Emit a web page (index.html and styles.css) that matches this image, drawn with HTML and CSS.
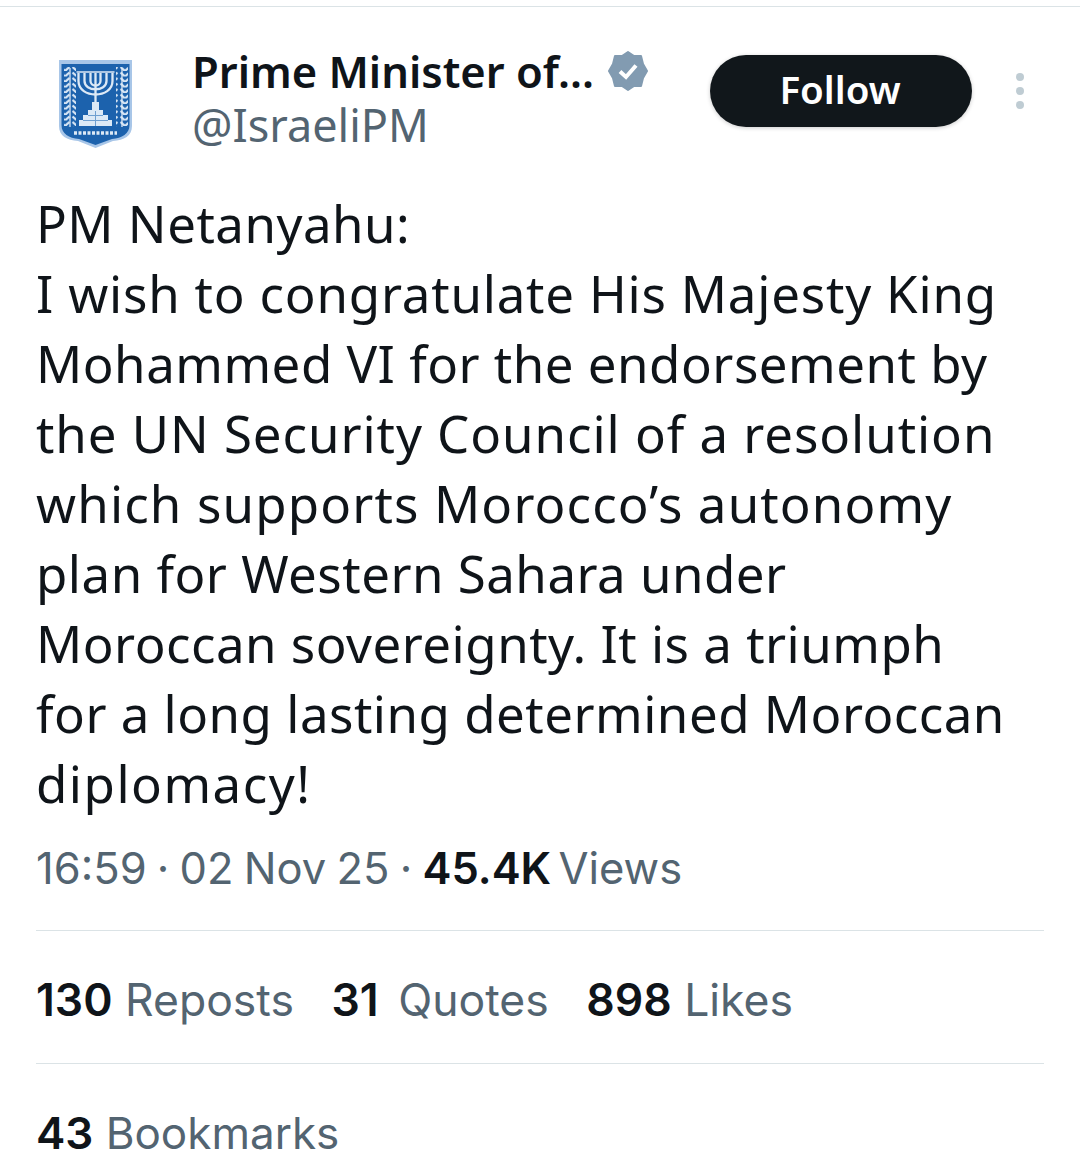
FILE: index.html
```html
<!DOCTYPE html>
<html lang="en">
<head>
<meta charset="utf-8">
<title>Tweet</title>
<link rel="stylesheet" href="styles.css">
</head>
<body>
<div class="topline"></div>
<main class="tweet">
  <header class="head">
    <svg class="avatar" viewBox="0 0 73 88" aria-hidden="true">
      <defs>
        <pattern id="leaf" width="12" height="5.5" patternUnits="userSpaceOnUse">
          <path d="M6 5.5L1.5 1.5M6 5.5L10.5 1.5" fill="none" stroke="#d8e6f5" stroke-width="2.2"/>
        </pattern>
      </defs>
      <path d="M0 0H73V66C73 76 65 80 54 81L36.500 88L19 81C8 80 0 76 0 66Z" fill="#a8c6e8"/>
      <path d="M2.500 4H70.500V65C70.500 74 63 78 53 79L36.500 85L20 79C10 78 2.500 74 2.500 65Z" fill="#1c62ad"/>
      <g fill="none" stroke="#dce9f6" stroke-width="2.300">
        <path d="M36.500 13V50"/>
        <path d="M31.500 13V21C31.500 27 41.500 27 41.500 21V13"/>
        <path d="M25.500 13V21C25.500 32 47.500 32 47.500 21V13"/>
        <path d="M19.500 13V21C19.500 39 53.500 39 53.500 21V13"/>
      </g>
      <path d="M17.500 12H55.500" stroke="#dce9f6" stroke-width="1.500"/>
      <path d="M33 42H40V50H33Z" fill="#dce9f6"/>
      <path d="M29 50H44V55H49V60H53V66H20V60H24V55H29Z" fill="#dce9f6"/>
      <path d="M24 60.500H49M36.500 51V66M29 55.500H44" stroke="#6f9fd0" stroke-width="1"/>
      <rect x="5" y="7" width="12" height="60" fill="url(#leaf)"/>
      <rect x="57" y="7" width="12" height="60" fill="url(#leaf)"/>
      <path d="M11 8V67M63 8V67" stroke="#dce9f6" stroke-width="1.300"/>
      <path d="M15 73H58" stroke="#dce9f6" stroke-width="3.500" stroke-dasharray="3 1.500"/>
    </svg>
    <div class="identity">
      <div class="name-row">
        <span class="name">Prime Minister of...</span>
        <svg class="badge" viewBox="0 0 40 40" aria-hidden="true">
          <path d="M20 1L26 5L33 5L35 13L39 20L35 27L33 35L26 35L20 39L14 35L7 35L5 27L1 20L5 13L7 5L14 5Z" fill="#829bb1" stroke="#829bb1" stroke-width="2" stroke-linejoin="round"/>
          <path d="M12 20.500L18 26L28 14.500" fill="none" stroke="#fff" stroke-width="4"/>
        </svg>
      </div>
      <div class="handle">@IsraeliPM</div>
    </div>
    <button class="follow">Follow</button>
    <div class="more"><i></i><i></i><i></i></div>
  </header>
  <div class="body">
    <p class="line">PM Netanyahu:</p>
    <p class="line mid">I wish to congratulate His Majesty King</p>
    <p class="line">Mohammed VI for the endorsement by</p>
    <p class="line wide">the UN Security Council of a resolution</p>
    <p class="line wider">which supports Morocco’s autonomy</p>
    <p class="line">plan for Western Sahara under</p>
    <p class="line">Moroccan sovereignty. It is a triumph</p>
    <p class="line">for a long lasting determined Moroccan</p>
    <p class="line widest">diplomacy!</p>
  </div>
  <div class="meta">16:59 · 02 Nov 25 · <b class="count">45.4K</b> Views</div>
  <div class="stats">
    <span class="stat"><b>130</b> Reposts</span>
    <span class="stat"><b class="spaced">31</b> Quotes</span>
    <span class="stat"><b>898</b> Likes</span>
  </div>
  <div class="stats last"><span class="stat"><b>43</b> Bookmarks</span></div>
</main>
</body>
</html>
```
FILE: styles.css
```css
* { box-sizing: border-box; }
html, body { margin: 0; height: 1176px; overflow: hidden; background: #fff; }
body { font-family: "Noto Sans", "Open Sans", sans-serif; color: #0f1419; }
.topline { height: 1px; margin-top: 6px; background: #dbe3e6; }
.tweet { padding: 0 36px; }
.head { display: flex; align-items: flex-start; height: 147px; }
.avatar { width: 73px; height: 88px; margin: 53px 0 0 23px; flex: none; filter: blur(.5px); }
.identity { margin: 36px 0 0 60px; width: 518px; flex: none; }
.name-row { display: flex; align-items: center; gap: 14px; height: 56px; }
.name { font-size: 43.5px; line-height: 56px; font-weight: 600; }
.badge { width: 40px; height: 40px; margin-top: -1px; }
.handle { font-size: 45px; line-height: 52px; color: #536471; }
.follow { flex: none; width: 262px; height: 72px; margin-top: 48px; padding: 0 2px 4px 0; border: 0; border-radius: 36px; background: #11171b; color: #fff; font: 600 38.5px "Noto Sans", sans-serif; box-shadow: 0 1px 4px rgba(0,0,0,.2); }
.more { display: flex; flex-direction: column; gap: 6px; margin: 66px 0 0 44px; }
.more i { display: block; width: 8px; height: 8px; border-radius: 50%; background: #bfccd3; }
.body { margin-top: 34px; font-size: 51px; letter-spacing: .5px; line-height: 70px; color: #0f1419; white-space: nowrap; }
.line { margin: 0; }
.mid { letter-spacing: .8px; }
.wide { letter-spacing: .95px; }
.wider { letter-spacing: 1.15px; }
.widest { letter-spacing: 1.5px; }
.meta { margin-top: 20px; height: 92px; font-family: Inter, sans-serif; font-size: 43.5px; word-spacing: -2px; line-height: 60px; color: #536471; }
.meta b, .stat b { font-weight: 600; color: #0f1419; }
.count { margin-right: -3px; }
.stats { display: flex; gap: 37.5px; height: 133px; padding-top: 39px; border-top: 1px solid #dbe3e6; font-family: Inter, sans-serif; font-size: 44.5px; line-height: 60px; color: #536471; }
.stats.last { font-size: 44px; }
.spaced { margin-right: 7px; }
```
